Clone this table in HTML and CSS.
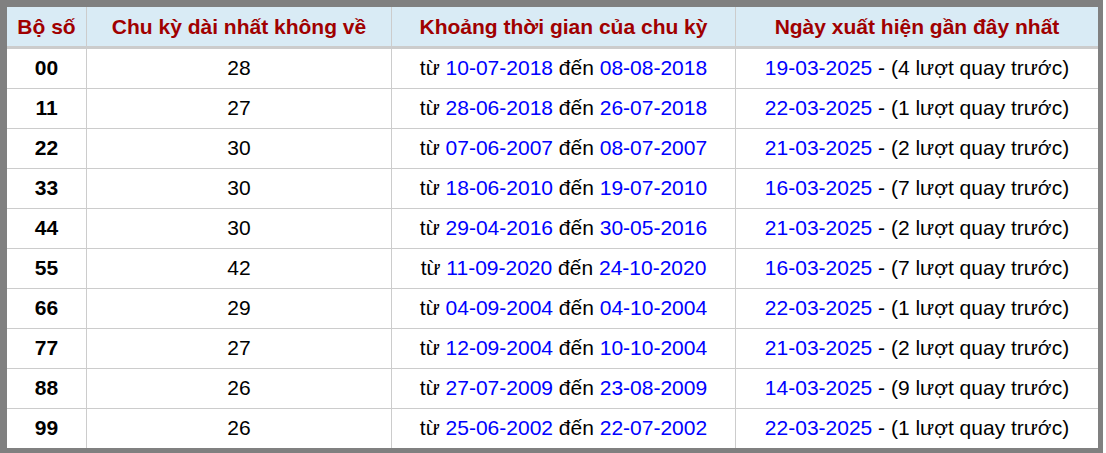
FILE: index.html
```html
<!DOCTYPE html>
<html lang="vi">
<head>
<meta charset="utf-8">
<link rel="stylesheet" href="styles.css">
</head>
<body>
<div class="frame">
  <div class="grid">
    <div class="cell head">Bộ số</div>
    <div class="cell head">Chu kỳ dài nhất không về</div>
    <div class="cell head">Khoảng thời gian của chu kỳ</div>
    <div class="cell head last">Ngày xuất hiện gần đây nhất</div>

    <div class="cell num">00</div><div class="cell">28</div><div class="cell"><span>từ <span class="d">10-07-2018</span> đến <span class="d">08-08-2018</span></span></div><div class="cell last"><span><span class="d">19-03-2025</span> - (4 lượt quay trước)</span></div>
    <div class="cell num">11</div><div class="cell">27</div><div class="cell"><span>từ <span class="d">28-06-2018</span> đến <span class="d">26-07-2018</span></span></div><div class="cell last"><span><span class="d">22-03-2025</span> - (1 lượt quay trước)</span></div>
    <div class="cell num">22</div><div class="cell">30</div><div class="cell"><span>từ <span class="d">07-06-2007</span> đến <span class="d">08-07-2007</span></span></div><div class="cell last"><span><span class="d">21-03-2025</span> - (2 lượt quay trước)</span></div>
    <div class="cell num">33</div><div class="cell">30</div><div class="cell"><span>từ <span class="d">18-06-2010</span> đến <span class="d">19-07-2010</span></span></div><div class="cell last"><span><span class="d">16-03-2025</span> - (7 lượt quay trước)</span></div>
    <div class="cell num">44</div><div class="cell">30</div><div class="cell"><span>từ <span class="d">29-04-2016</span> đến <span class="d">30-05-2016</span></span></div><div class="cell last"><span><span class="d">21-03-2025</span> - (2 lượt quay trước)</span></div>
    <div class="cell num">55</div><div class="cell">42</div><div class="cell"><span>từ <span class="d">11-09-2020</span> đến <span class="d">24-10-2020</span></span></div><div class="cell last"><span><span class="d">16-03-2025</span> - (7 lượt quay trước)</span></div>
    <div class="cell num">66</div><div class="cell">29</div><div class="cell"><span>từ <span class="d">04-09-2004</span> đến <span class="d">04-10-2004</span></span></div><div class="cell last"><span><span class="d">22-03-2025</span> - (1 lượt quay trước)</span></div>
    <div class="cell num">77</div><div class="cell">27</div><div class="cell"><span>từ <span class="d">12-09-2004</span> đến <span class="d">10-10-2004</span></span></div><div class="cell last"><span><span class="d">21-03-2025</span> - (2 lượt quay trước)</span></div>
    <div class="cell num">88</div><div class="cell">26</div><div class="cell"><span>từ <span class="d">27-07-2009</span> đến <span class="d">23-08-2009</span></span></div><div class="cell last"><span><span class="d">14-03-2025</span> - (9 lượt quay trước)</span></div>
    <div class="cell num end">99</div><div class="cell end">26</div><div class="cell end"><span>từ <span class="d">25-06-2002</span> đến <span class="d">22-07-2002</span></span></div><div class="cell last end"><span><span class="d">22-03-2025</span> - (1 lượt quay trước)</span></div>
  </div>
</div>
</body>
</html>
```

FILE: styles.css
```css
html, body {
  margin: 0;
  padding: 0;
  background: #ffffff;
}

.frame {
  width: 1091px;
  border-style: solid;
  border-color: #808080;
  border-width: 7px 5px 5px 7px;
  background: #ffffff;
}

.grid {
  display: grid;
  grid-template-columns: 80px 305px 344px 362px;
  grid-template-rows: 42px repeat(9, 40px) 39px;
  font-family: "Liberation Sans", Arial, sans-serif;
  font-size: 21px;
  color: #000000;
}

.cell {
  box-sizing: border-box;
  display: flex;
  align-items: center;
  justify-content: center;
  white-space: nowrap;
  padding-bottom: 2px;
  border-right: 1px solid #cccccc;
  border-bottom: 1px solid #cccccc;
}

.cell.last {
  border-right: none;
}

.cell.end {
  border-bottom: none;
}

.head {
  background: #d9ebf5;
  color: #a00000;
  font-weight: bold;
  padding-bottom: 0;
  border-bottom: 3px solid #cccccc;
}

.num {
  font-weight: bold;
}

.d {
  color: #0000ff;
}
```
